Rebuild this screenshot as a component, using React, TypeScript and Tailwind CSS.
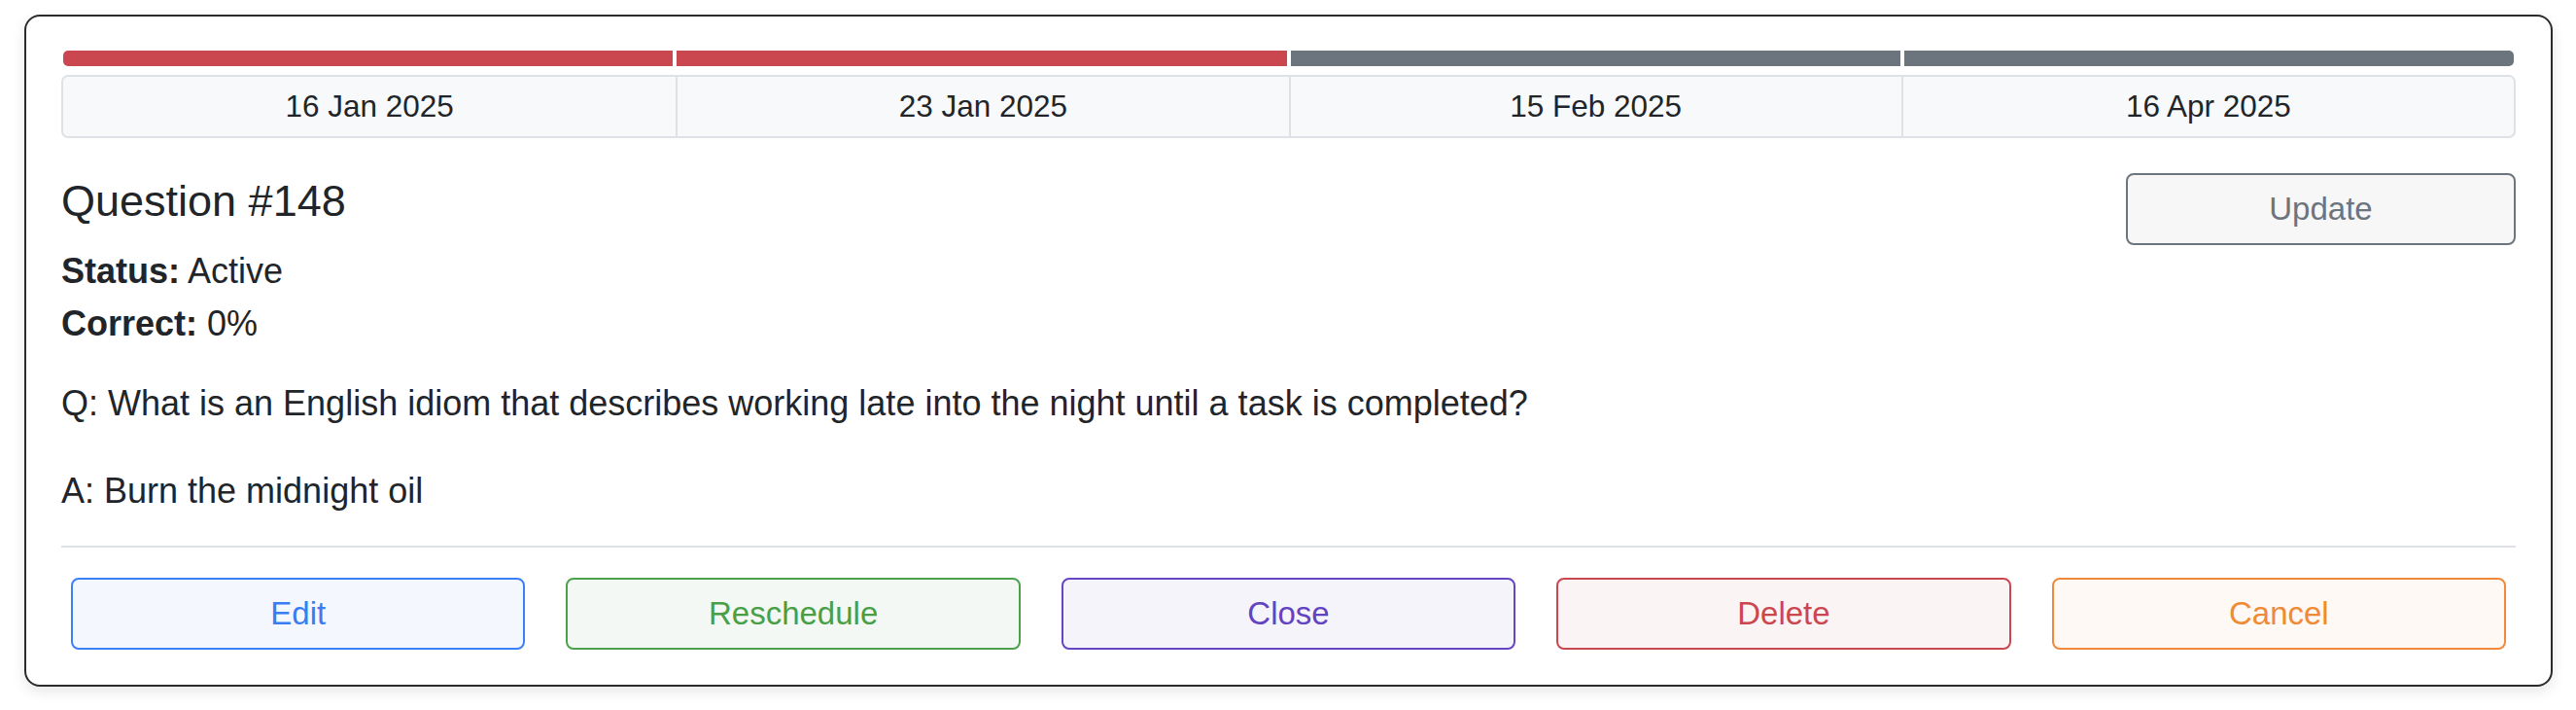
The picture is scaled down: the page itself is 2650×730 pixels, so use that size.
import React from "react";

const dates = ["16 Jan 2025", "23 Jan 2025", "15 Feb 2025", "16 Apr 2025"];
const segs = ["bg-[#cb4750]", "bg-[#cb4750]", "bg-[#6c757d]", "bg-[#6c757d]"];

const buttons = [
  { label: "Edit", cls: "border-[#3a80f6] bg-[#f4f7fe] text-[#3a7cf2]" },
  { label: "Reschedule", cls: "border-[#4ca24c] bg-[#f3f8f4] text-[#47a047]" },
  { label: "Close", cls: "border-[#6546c3] bg-[#f5f4fb] text-[#6243c1]" },
  { label: "Delete", cls: "border-[#cb4750] bg-[#fbf4f5] text-[#cb4750]" },
  { label: "Cancel", cls: "border-[#f0893a] bg-[#fef9f5] text-[#ef8a35]" },
];

export default function App() {
  return (
    <div className="w-[2650px] h-[730px] bg-white pl-[25px] pt-[15px] font-['Liberation_Sans',Arial,sans-serif] text-[#212529]">
      <div className="w-[2601px] border-2 border-[#2b2b2b] rounded-[16px] bg-white shadow-[0_5px_14px_rgba(0,0,0,0.10)] px-[36px] pt-[35px] pb-[36px]">
        <div className="mx-[2px] flex h-[16px] gap-[4px] overflow-hidden rounded-[5px]">
          {segs.map((s, i) => (
            <div key={i} className={`flex-1 ${s}`} />
          ))}
        </div>
        <div className="mt-[9px] grid h-[65px] grid-cols-4 overflow-hidden rounded-[7px] border-2 border-[#dee2e6] bg-[#f8f9fa]">
          {dates.map((d, i) => (
            <div
              key={d}
              className={`flex items-center justify-center text-[31.5px] ${i > 0 ? "border-l-2 border-[#dee2e6]" : ""}`}
            >
              {d}
            </div>
          ))}
        </div>
        <div className="mt-[36px] flex items-start justify-between">
          <div>
            <h5 className="mt-[2px] text-[45px] leading-[54px] font-medium">Question #148</h5>
            <div className="mt-[20px] text-[36px] leading-[50px]">
              <span className="font-bold">Status:</span> Active
            </div>
            <div className="mt-[4px] text-[36px] leading-[50px]">
              <span className="font-bold">Correct:</span> 0%
            </div>
          </div>
          <button className="h-[74px] w-[401px] rounded-[8px] border-2 border-[#6c757d] bg-[#f7f7f7] text-[33px] text-[#6c757d]">
            Update
          </button>
        </div>
        <p className="mt-[30px] text-[36px] leading-[54px]">
          Q: What is an English idiom that describes working late into the night until a task is completed?
        </p>
        <p className="mt-[36px] text-[36px] leading-[54px]">A: Burn the midnight oil</p>
        <div className="mt-[29px] h-[2px] bg-[#dee2e6]" />
        <div className="mt-[31px] flex gap-[42px] px-[10px]">
          {buttons.map((b) => (
            <button
              key={b.label}
              className={`h-[74px] flex-1 rounded-[8px] border-2 text-[33px] ${b.cls}`}
            >
              {b.label}
            </button>
          ))}
        </div>
      </div>
    </div>
  );
}
